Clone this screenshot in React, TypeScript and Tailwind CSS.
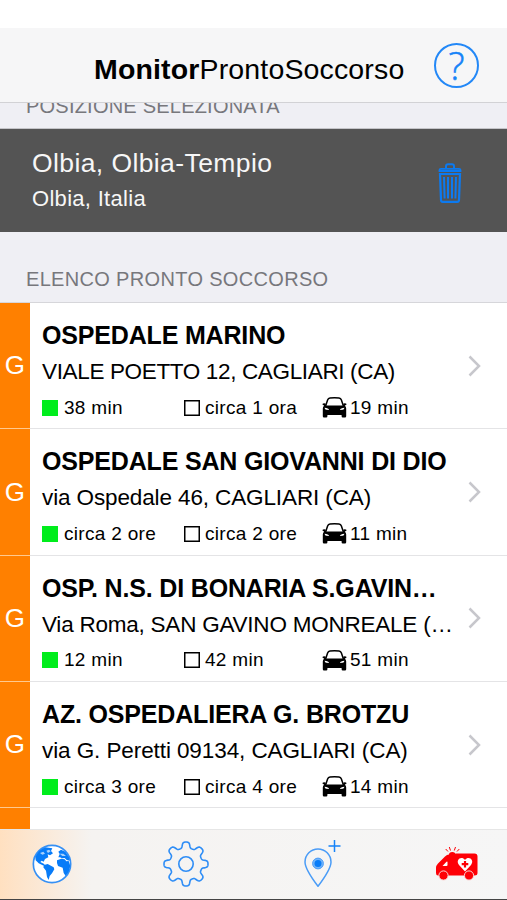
type Hospital = {
  name: string
  address: string
  addressTracking: string
  green: string
  white: string
  drive: string
}

const hospitals: Hospital[] = [
  {
    name: "OSPEDALE MARINO",
    address: "VIALE POETTO 12, CAGLIARI (CA)",
    addressTracking: "tracking-[-0.35px]",
    green: "38 min",
    white: "circa 1 ora",
    drive: "19 min",
  },
  {
    name: "OSPEDALE SAN GIOVANNI DI DIO",
    address: "via Ospedale 46, CAGLIARI (CA)",
    addressTracking: "tracking-[-0.12px]",
    green: "circa 2 ore",
    white: "circa 2 ore",
    drive: "11 min",
  },
  {
    name: "OSP. N.S. DI BONARIA S.GAVIN…",
    address: "Via Roma, SAN GAVINO MONREALE (…",
    addressTracking: "tracking-[-0.23px]",
    green: "12 min",
    white: "42 min",
    drive: "51 min",
  },
  {
    name: "AZ. OSPEDALIERA G. BROTZU",
    address: "via G. Peretti 09134, CAGLIARI (CA)",
    addressTracking: "tracking-[-0.09px]",
    green: "circa 3 ore",
    white: "circa 4 ore",
    drive: "14 min",
  },
]

function CarIcon() {
  return (
    <svg width="25" height="21" viewBox="0 0 25 21">
      <path d="M3.6 9 L5.6 3 Q6.2 1.300 8 1.100 Q12.500 .6 17 1.100 Q18.800 1.300 19.400 3 L21.400 9" fill="none" stroke="#000" strokeWidth="1.5" />
      <path
        fillRule="evenodd"
        d="M.4 7 Q1.500 5.800 3.500 6.600 L4 8.400 H21 L21.500 6.600 Q23.500 5.800 24.600 7 Q24.500 8.200 22.800 8.400 Q24.200 9.800 24.200 11.500 V19.300 Q24.200 20.500 23 20.500 H20.800 Q19.600 20.500 19.600 19.300 V18 H5.400 V19.300 Q5.400 20.500 4.200 20.500 H2 Q.8 20.500 .8 19.300 V11.500 Q.8 9.800 2.200 8.400 Q.5 8.200 .4 7 Z M2.600 10.800 Q2.800 12.600 4.300 12.800 L7 13 Q6.600 11 2.600 10.800 Z M22.400 10.800 Q18.400 11 18 13 L20.700 12.800 Q22.200 12.600 22.400 10.800 Z"
      />
    </svg>
  )
}

function TrashIcon() {
  return (
    <svg width="24" height="42" viewBox="0 0 24 42" fill="none" stroke="#0c7af0">
      <path d="M8 6.5 V4.2 Q8 2.2 10 2.2 H14 Q16 2.2 16 4.2 V6.5" strokeWidth="2" />
      <path d="M1.5 9 V8 Q1.5 6.8 3 6.8 H21 Q22.5 6.8 22.5 8 V9 Z" strokeWidth="1.8" />
      <path d="M2 12 H22 L21 38 Q20.9 39.8 19.3 39.8 H4.7 Q3.1 39.8 3 38 Z" strokeWidth="2.2" />
      <path d="M6 15 L6.6 36.5 M10 15 V36.5 M14 15 V36.5 M18 15 L17.4 36.5" strokeWidth="2" />
    </svg>
  )
}

function GlobeIcon() {
  return (
    <svg width="40" height="40" viewBox="0 0 120 120" fill="#087cf8">
      <circle cx="60" cy="60" r="56" fill="#fff" stroke="#3590f5" strokeWidth="5" />
      <path d="M10 38 Q20 17 40 10 L61 13 L57 21 L63 28 L54 34 L47 31 L49 40 L39 45 L35 53 L29 50 L25 54 L38 61 L35 65 L20 58 L11 49 Z" />
      <path d="M36 63 L47 60 L65 70 L67 76 L60 88 L53 96 L50 108 L45 99 L42 80 L34 70 Z" />
      <path d="M75 49 L88 44 L98 46 L103 52 L110 51 L115 66 L110 83 L101 96 L95 87 L92 71 L78 66 L75 57 Z" />
      <path d="M79 40 L83 30 L79 23 L87 17 L100 23 L111 40 L113 50 L104 48 L98 42 L90 43 L84 40 Z" />
      <path d="M43 20 L51 17 L56 22 L48 27 Z M24 27 L34 23 L39 29 L31 32 Z M83 29 L94 29 L102 36 L91 36 Z" fill="#a9d1fb" />
    </svg>
  )
}

// eight rounded teeth, sampled around the wheel
const gearPath =
  "M" +
  Array.from({ length: 240 }, (_, i) => {
    const t = (i / 240) * Math.PI * 2
    const r = 19.1 + 3 * Math.tanh(2 * Math.cos(8 * t))
    return `${(24 + r * Math.cos(t)).toFixed(2)} ${(24 + r * Math.sin(t)).toFixed(2)}`
  }).join("L") +
  "Z"

function GearIcon() {
  return (
    <svg width="48" height="48" viewBox="0 0 48 48" fill="none" stroke="#2e8df6" strokeWidth="1.6">
      <path d={gearPath} strokeLinejoin="round" />
      <circle cx="24" cy="24" r="7.2" />
    </svg>
  )
}

function PinIcon() {
  return (
    <svg width="40" height="48" viewBox="0 0 40 48" fill="none" stroke="#4a9cf7">
      <path d="M15 46.3 C12.5 43 2 29 2 22 A13 13 0 0 1 28 22 C28 29 17.5 43 15 46.3 Z" strokeWidth="1.5" strokeLinejoin="round" />
      <circle cx="15" cy="23.5" r="5.4" fill="#72b4fa" strokeWidth="1" />
      <circle cx="15" cy="23.5" r="3.5" fill="#087cf8" stroke="none" />
      <path d="M31.5 0 V12 M25.5 6 H37.5" stroke="#1683f8" strokeWidth="1.5" />
    </svg>
  )
}

function AmbulanceIcon() {
  return (
    <svg width="44" height="36" viewBox="0 0 44 36">
      <path d="M14 9.5 V8.5 Q14 6 17.3 6 Q20.500 6 20.500 8.500 V7.500 H39.500 Q42.500 7.500 42.500 10.500 V27 Q42.500 29.500 39.500 29.500 H3 Q1 29.500 1 27 V22 Q1 19.500 3 17.500 L10 10.500 Q12 8.500 14 8.500 Z" fill="#fe0006" />
      <path d="M7.500 20 L11.500 15.800 Q12.500 15 12.500 16.500 V19 Q12.500 20 11.500 20 Z" fill="#fff" />
      <path d="M30 25.500 L24 19 C20 14 26.500 9.300 30 14 C33.500 9.300 40 14 36 19 Z" fill="#fff" />
      <path d="M30 15 V21.500 M26.700 18.200 H33.300" stroke="#fe0006" strokeWidth="2.2" />
      <circle cx="8.5" cy="29.5" r="4.6" fill="#fe0006" stroke="#f8d8d8" strokeWidth="1" />
      <circle cx="34" cy="29.5" r="4.6" fill="#fe0006" stroke="#f8d8d8" strokeWidth="1" />
      <path d="M15.500 4.500 L14.300 1 M19.300 4.500 L20.500 1 M13 5.500 L10.700 3 M22 5.500 L24.300 3" stroke="#fe0006" strokeWidth="1" />
    </svg>
  )
}

function HospitalRow({ hospital }: { hospital: Hospital }) {
  return (
    <li className="flex h-[126.35px] shrink-0">
      <div className="flex w-[29.5px] shrink-0 items-center justify-center border-b border-[#ffc98f] bg-[#ff8000] text-[26px] text-white">
        G
      </div>

      <div className="flex min-w-0 flex-1 border-b border-[#e4e4e6] pl-[12.5px]">
        <div className="w-[416px] shrink-0 whitespace-nowrap pt-[17px]">
          <h2 className="text-[25px] leading-[30px] font-bold tracking-[-0.17px]">{hospital.name}</h2>
          <p className={`mt-[7px] text-[22.5px] leading-[30px] ${hospital.addressTracking}`}>
            {hospital.address}
          </p>

          <div className="mt-[8.5px] flex h-6 items-center text-[19px] leading-6 tracking-[0.3px]">
            <div className="flex w-[142px] items-center gap-1.5">
              <span className="size-4 bg-[#00ed1c]" />
              {hospital.green}
            </div>
            <div className="flex w-[138px] items-center gap-[5px]">
              <span className="size-4 shadow-[inset_0_0_0_1.5px_#000]" />
              {hospital.white}
            </div>
            <div className="flex items-center gap-[3px]">
              <CarIcon />
              {hospital.drive}
            </div>
          </div>
        </div>

        <div className="flex flex-1 items-center pl-[10px]">
          <svg width="14" height="22" viewBox="0 0 14 22" fill="none" stroke="#c7c7cc" strokeWidth="2.5">
            <path d="M1.5 1.5 L11 11 L1.5 20.5" />
          </svg>
        </div>
      </div>
    </li>
  )
}

export default function App() {
  return (
    <div className="flex h-[900px] w-[507px] flex-col overflow-hidden bg-white font-['Liberation_Sans',Arial,sans-serif] text-black">
      <div className="h-7 shrink-0" />

      {/* NAV BAR */}
      <header className="flex h-[75px] shrink-0 items-center justify-between border-b border-[#d2d2d5] bg-[#f6f6f7] pr-[28px] pl-[94px]">
        <h1 className="pt-[7px] text-[28.5px] leading-8 tracking-[0.15px] whitespace-nowrap">
          <b>Monitor</b>ProntoSoccorso
        </h1>
        <button className="flex size-[45px] shrink-0 items-center justify-center rounded-full border-2 border-[#2388f7] font-['Open_Sans',sans-serif] text-[38px] leading-none font-light text-[#1683f8] [-webkit-text-stroke:0.5px]">
          ?
        </button>
      </header>

      {/* SELECTED POSITION */}
      <div className="h-[26px] shrink-0 overflow-hidden border-b border-[#c4c4c8] bg-[#efeff4] pl-[26px] text-[20px] leading-6 tracking-[0.22px] whitespace-nowrap text-[#77777c]">
        <p className="-mt-[9px]">POSIZIONE SELEZIONATA</p>
      </div>
      <section className="flex h-[103px] shrink-0 justify-between bg-[#545454] pr-[45px] pl-[32px] text-[#f7f7f7]">
        <div className="pt-[18px] whitespace-nowrap">
          <p className="text-[26.5px] leading-8 tracking-[0.4px]">Olbia, Olbia-Tempio</p>
          <p className="mt-1.5 text-[22px] leading-7 tracking-[0.3px]">Olbia, Italia</p>
        </div>
        <div className="pt-[33px]">
          <TrashIcon />
        </div>
      </section>

      {/* HOSPITAL LIST */}
      <div className="h-[71px] shrink-0 border-b border-[#d6d6da] bg-[#efeff4] pt-[35px] pl-[26px] text-[20px] leading-6 tracking-[0.33px] whitespace-nowrap text-[#77777c]">
        ELENCO PRONTO SOCCORSO
      </div>
      <ul className="flex min-h-0 flex-1 flex-col overflow-hidden">
        {hospitals.map((hospital) => (
          <HospitalRow key={hospital.name} hospital={hospital} />
        ))}
        <li className="w-[29.5px] flex-1 bg-[#ff8000]" />
      </ul>

      {/* TAB BAR */}
      <nav className="flex h-[71px] shrink-0 items-center border-t border-b border-t-[#e6e6e6] border-b-[#444] bg-linear-to-r from-[#ffe0c0] via-[#f5f3f1] via-18% to-[#f6f6f6] pb-[2px] pl-[31.5px]">
        <div className="w-[130.5px]">
          <GlobeIcon />
        </div>
        <div className="w-[141px]">
          <GearIcon />
        </div>
        <div className="w-[132px]">
          <PinIcon />
        </div>
        <AmbulanceIcon />
      </nav>
    </div>
  )
}
